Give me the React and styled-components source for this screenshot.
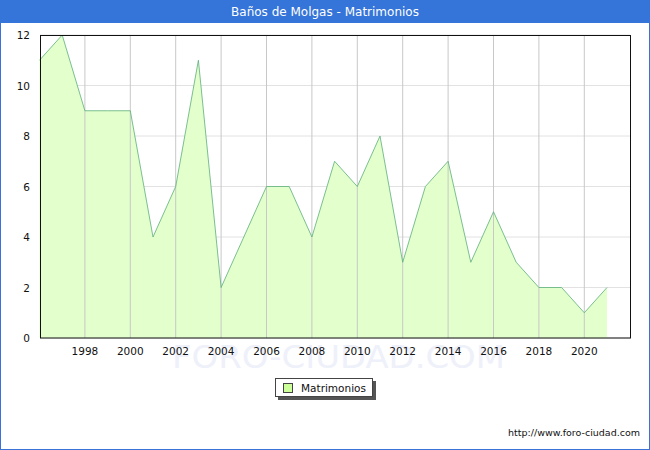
import React from 'react';
import styled, { createGlobalStyle } from 'styled-components';

const Global = createGlobalStyle`
  body { margin: 0; font-family: "DejaVu Sans", Verdana, sans-serif; }
`;

const Frame = styled.div`
  width: 650px;
  height: 450px;
  box-sizing: border-box;
  border: 1px solid #3a72d8;
  border-top: none;
  display: flex;
  flex-direction: column;
  background: #fff;
`;

const TitleBar = styled.div`
  height: 23px;
  background: #3574d8;
  color: #fff;
  font-size: 12px;
  display: flex;
  align-items: center;
  justify-content: center;
  margin: 0 -1px;
`;

const LegendRow = styled.div`
  display: flex;
  justify-content: center;
  margin-top: 5px;
  padding-right: 2px;
`;

const LegendBox = styled.div`
  display: flex;
  align-items: center;
  gap: 8px;
  height: 17px;
  padding: 0 6px 0 7px;
  border: 1px solid #444;
  box-shadow: 3px 3px 0 #555;
  font-size: 10.5px;
  color: #111;
`;

const Swatch = styled.span`
  width: 8px;
  height: 8px;
  border: 1px solid #444;
  background: #ccff99;
`;

const Footer = styled.div`
  margin-top: auto;
  padding: 0 9px 11px 0;
  text-align: right;
  font-size: 9.5px;
  color: #111;
`;

const data = [11, 12, 9, 9, 9, 4, 6, 11, 2, 4, 6, 6, 4, 7, 6, 8, 3, 6, 7, 3, 5, 3, 2, 2, 1, 2];
const X0 = 39.5, DX = 22.7, Y0 = 338, DY = 25.25;
const px = (i) => X0 + i * DX;
const py = (v) => Y0 - v * DY;

function Chart() {
  const pts = data.map((v, i) => `${px(i)},${py(v)}`).join(' ');
  const area = `${px(0)},${Y0} ${pts} ${px(data.length - 1)},${Y0}`;
  const years = [];
  for (let y = 1998; y <= 2020; y += 2) years.push(y);
  return (
    <svg width="648" height="350" viewBox="1 23 648 350" style={{ display: 'block' }}>
      <text x="172" y="368" fontSize="32" fill="#eef0fa" fontFamily="DejaVu Sans" textLength="333" lengthAdjust="spacingAndGlyphs">FORO-CIUDAD.COM</text>
      {[0, 2, 4, 6, 8, 10, 12].map((v) => (
        <g key={v}>
          <line x1="40" x2="630" y1={py(v)} y2={py(v)} stroke="#e2e2e2" />
          <text x="30" y={py(v) + 4} fontSize="10.5" textAnchor="end" fill="#111" fontFamily="DejaVu Sans">{v}</text>
        </g>
      ))}
      <polygon points={area} fill="#e2ffcc" />
      {years.map((y) => {
        const x = px(y - 1996);
        return (
          <g key={y}>
            <line x1={x} x2={x} y1="35" y2={Y0} stroke="#c8c8c8" />
            <text x={x} y="355" fontSize="10.5" textAnchor="middle" fill="#111" fontFamily="DejaVu Sans">{y}</text>
          </g>
        );
      })}
      <polyline points={pts} fill="none" stroke="#5cae7a" strokeWidth="0.8" />
      <rect x="40.5" y="35.5" width="590" height="302.5" fill="none" stroke="#111" />
    </svg>
  );
}

export default function App() {
  return (
    <Frame>
      <Global />
      <TitleBar>Baños de Molgas - Matrimonios</TitleBar>
      <Chart />
      <LegendRow>
        <LegendBox><Swatch />Matrimonios</LegendBox>
      </LegendRow>
      <Footer>http://www.foro-ciudad.com</Footer>
    </Frame>
  );
}
